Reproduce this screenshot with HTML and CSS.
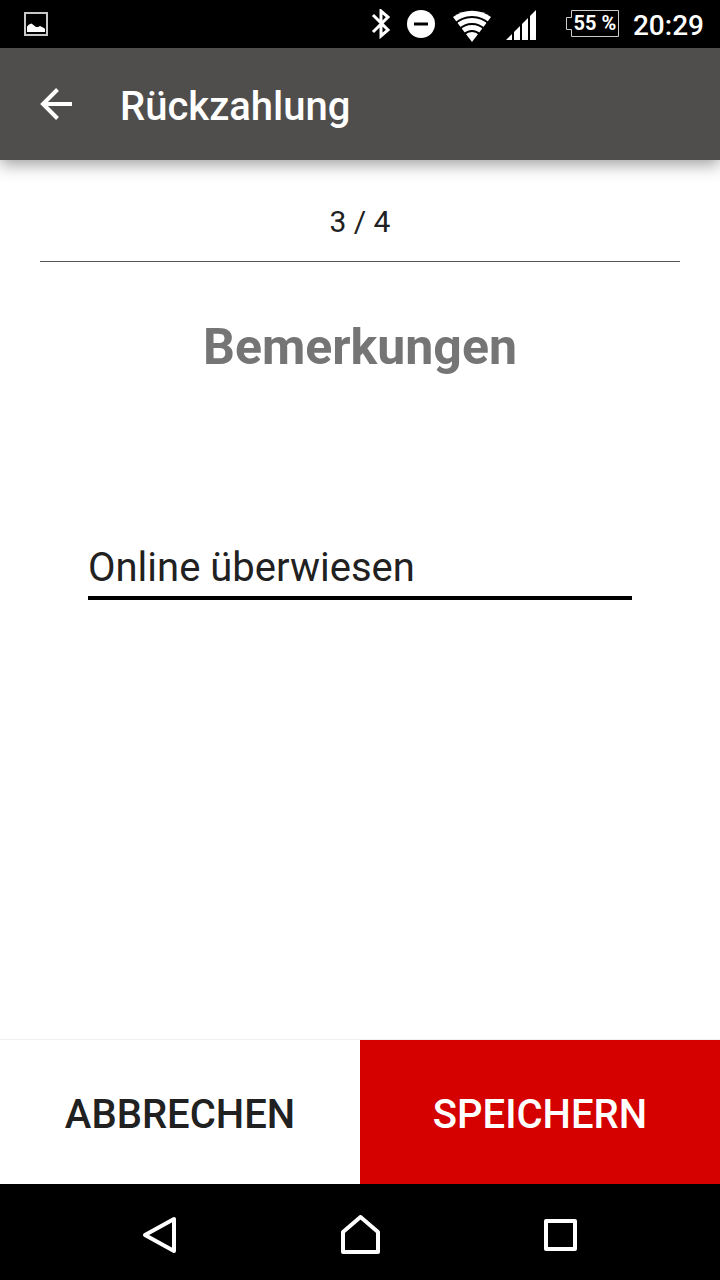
FILE: index.html
```html
<!DOCTYPE html>
<html lang="de">
<head>
<meta charset="utf-8">
<meta name="viewport" content="width=device-width, initial-scale=1">
<title>Rückzahlung</title>
<link rel="stylesheet" href="styles.css">
</head>
<body>
<div class="screen">
  <div class="status">
    <svg class="status-picture" width="24" height="24" viewBox="0 0 24 24" aria-hidden="true">
      <rect x="1" y="1" width="22" height="22" fill="none" stroke="#c8c8c8" stroke-width="2"/>
      <path d="M3 20V14.500L5 12.500L7.500 11.500L12 15L14 15L16 14L20 16L21 17V20Z" fill="#fff"/>
    </svg>
    <svg class="status-bluetooth" width="20" height="30" viewBox="0 0 20 30" aria-hidden="true">
      <path d="M2 6L17 21L10 27V2L17 8L2 23" fill="none" stroke="#fff" stroke-width="3"/>
    </svg>
    <svg class="status-dnd" width="28" height="28" viewBox="0 0 28 28" aria-hidden="true">
      <circle cx="14" cy="14" r="14" fill="#fff"/>
      <path d="M7 14H21" stroke="#000" stroke-width="3"/>
    </svg>
    <svg class="status-wifi" width="40" height="32" viewBox="0 0 40 32" aria-hidden="true">
      <path d="M1 7A32 32 0 0 1 39 7L20 32Z" fill="#fff"/>
      <g fill="none" stroke="#000" stroke-width="2">
        <circle cx="20" cy="32" r="25"/>
        <circle cx="20" cy="32" r="18"/>
        <circle cx="20" cy="32" r="11"/>
      </g>
    </svg>
    <svg class="status-signal" width="30" height="30" viewBox="0 0 30 30" aria-hidden="true">
      <path d="M0 30L30 0V30Z" fill="#fff"/>
      <path d="M7 0V30M15 0V30M23 0V30" stroke="#000" stroke-width="2"/>
    </svg>
    <span class="battery">
      <svg class="battery-shape" width="53" height="27" viewBox="0 0 53 27" aria-hidden="true">
        <path d="M5.500 0.500H52.500V26.500H5.500V19.500H0.500V7.500H5.500Z" fill="none" stroke="#ccc"/>
      </svg>
      <span class="battery-text">55 %</span>
    </span>
    <time class="clock">20:29</time>
  </div>
  <header class="toolbar">
    <button class="back" type="button" aria-label="Zurück">
      <svg width="32" height="32" viewBox="0 0 32 32" aria-hidden="true">
        <path d="M32 16H3M17.500 1.500L3 16L17.500 30.500" fill="none" stroke="#fff" stroke-width="4"/>
      </svg>
    </button>
    <h1 class="title">Rückzahlung</h1>
  </header>
  <main class="content">
    <p class="step">3 / 4</p>
    <h2 class="heading"><label for="note">Bemerkungen</label></h2>
    <input class="note" id="note" type="text" value="Online überwiesen">
  </main>
  <div class="actions">
    <button class="action cancel" type="button">ABBRECHEN</button>
    <button class="action save" type="button">SPEICHERN</button>
  </div>
  <nav class="navbar">
    <button class="nav-button" type="button" aria-label="Zurück">
      <svg width="40" height="40" viewBox="0 0 40 40" aria-hidden="true"><path d="M34 4V36L5 20Z"/></svg>
    </button>
    <button class="nav-button" type="button" aria-label="Startseite">
      <svg width="40" height="40" viewBox="0 0 40 40" aria-hidden="true"><path d="M3 37V17L20.500 2L38 17V37Z"/></svg>
    </button>
    <button class="nav-button" type="button" aria-label="Übersicht">
      <svg width="40" height="40" viewBox="0 0 40 40" aria-hidden="true"><path d="M6 6H35V34H6Z"/></svg>
    </button>
  </nav>
</div>
</body>
</html>
```
FILE: styles.css
```css
* {
  box-sizing: border-box;
}

body {
  margin: 0;
  font-family: Roboto, sans-serif;
  color: #212121;
  background: #fff;
}

button {
  margin: 0;
  padding: 0;
  border: 0;
  font: inherit;
  color: inherit;
  background: none;
}

svg {
  display: block;
}

.screen {
  display: flex;
  flex-direction: column;
  min-height: 100vh;
}

.status {
  display: flex;
  align-items: center;
  height: 48px;
  padding: 0 16px 0 24px;
  color: #fff;
  background: #000;
}

.status-picture {
  margin-right: auto;
}

.status-bluetooth {
  margin-right: 16px;
}

.status-dnd {
  margin-right: 17px;
}

.status-wifi {
  margin: 4px 14px 0 0;
}

.status-signal {
  margin: 2px 30px 0 0;
}

.battery {
  position: relative;
  margin-right: 14px;
}

.battery-shape {
  margin-bottom: 2px;
}

.battery-text {
  position: absolute;
  inset: 0 0 0 5px;
  font-size: 20px;
  font-weight: 700;
  line-height: 26px;
  text-align: center;
  white-space: nowrap;
}

.clock {
  padding-top: 4px;
  font-size: 28px;
  font-weight: 500;
  line-height: 44px;
}

.toolbar {
  display: flex;
  align-items: center;
  gap: 48px;
  height: 112px;
  padding: 0 40px;
  color: #fff;
  background: #4f4e4c;
  box-shadow: 0 4px 16px rgba(0, 0, 0, 0.4);
}

.title {
  margin: 6px 0 0;
  font-size: 40px;
  font-weight: 500;
  line-height: 48px;
}

.content {
  display: flex;
  flex: 1;
  flex-direction: column;
  padding: 40px 40px 0;
}

.step {
  margin: 0;
  padding-bottom: 18px;
  border-bottom: 1px solid #555;
  font-size: 30px;
  line-height: 43px;
  text-align: center;
}

.heading {
  margin: 55px 0 0;
  font-size: 50px;
  font-weight: 700;
  line-height: 60px;
  text-align: center;
  color: #757575;
}

.note {
  margin: 163px 48px 0;
  padding: 0;
  border: 0;
  border-bottom: 4px solid #000;
  border-radius: 0;
  outline: 0;
  font: 40px/56px Roboto, sans-serif;
  color: #212121;
  background: none;
}

.actions {
  display: grid;
  grid-template-columns: 1fr 1fr;
}

.action {
  height: 145px;
  padding-top: 6px;
  border-top: 1px solid #f1f1f1;
  font-size: 40px;
  font-weight: 500;
  line-height: 48px;
}

.save {
  color: #fff;
  background: #d50000 padding-box;
}

.navbar {
  display: flex;
  justify-content: center;
  gap: 160px;
  height: 96px;
  background: #000;
}

.nav-button svg {
  margin-top: 6px;
  fill: none;
  stroke: #fff;
  stroke-width: 4px;
  stroke-linejoin: round;
}
```
